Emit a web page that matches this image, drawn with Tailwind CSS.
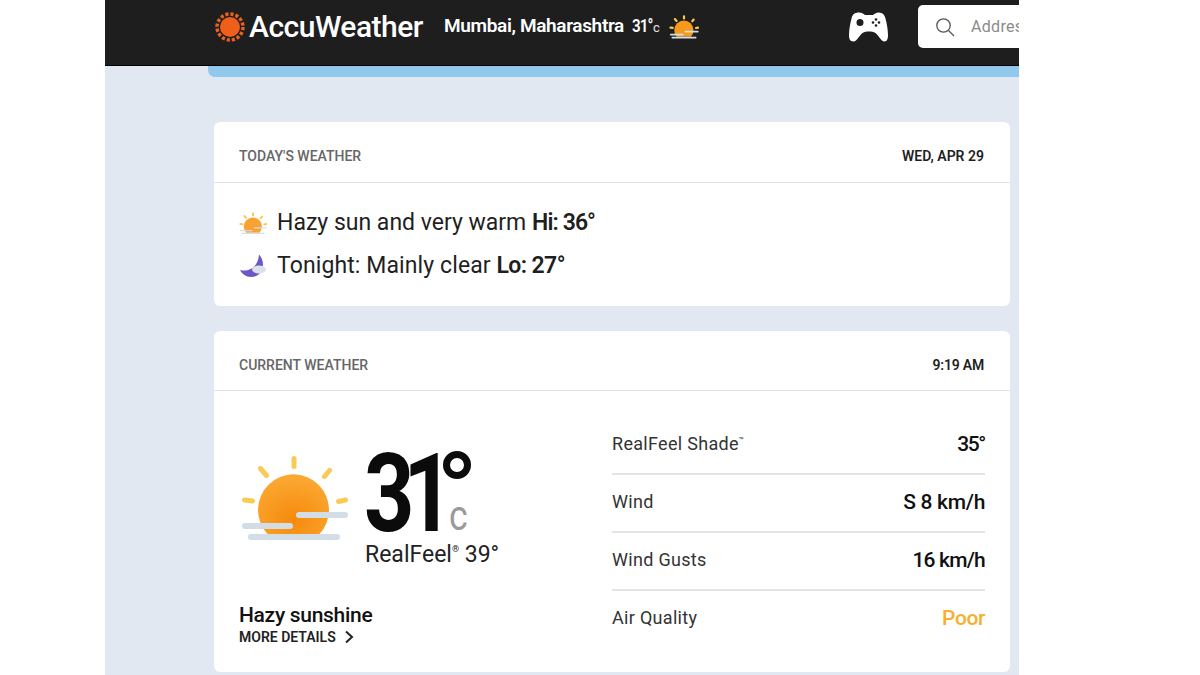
<!DOCTYPE html>
<html lang="en">
  <head>
    <meta charset="UTF-8" />
    <meta name="viewport" content="width=device-width, initial-scale=1.0" />
    <title>AccuWeather</title>
    <script src="https://cdn.jsdelivr.net/npm/@tailwindcss/browser@4"></script>
  </head>
  <body class="bg-white overflow-hidden font-['Roboto',sans-serif]">
    <div class="w-[1200px] h-[675px] pl-[105px] pr-[181px]">
      <div class="w-[914px] h-[675px] bg-[#e1e8f1] overflow-hidden">
        <!-- header -->
        <header class="h-[66px] bg-[#1e1e1e] flex items-center pl-[110px] pb-[12px] text-white border-b border-black">
          <svg class="w-[30px] h-[30px] shrink-0" viewBox="0 0 30 30">
            <circle cx="15" cy="15" r="13" fill="none" stroke="#e8621f" stroke-width="3.500" stroke-dasharray="3.200 1.905" />
            <circle cx="15" cy="15" r="10" fill="#ee5f1b" />
          </svg>
          <span class="ml-[4px] w-[178px] text-[30px] leading-none tracking-[-0.5px] font-medium">AccuWeather</span>
          <span class="ml-[17px] w-[188px] text-[19px] font-semibold tracking-[-0.35px] whitespace-nowrap">Mumbai, Maharashtra</span>
          <span class="block w-[20px] origin-left scale-x-[0.8] text-[19px] font-semibold tracking-[-1.2px] whitespace-nowrap">31°</span>
          <span class="text-[13px] text-gray-200 mt-[3px] ml-[1px] w-[16px]">c</span>
          <svg class="w-[30px] h-[25px] shrink-0" viewBox="0 0 110 92">
            <g stroke="#f8cb57" stroke-width="8" stroke-linecap="round">
              <path d="M55 8.500v8M21.500 18.500l6 7M90.500 20.500l-5 6M5.500 50l8 1M106.500 50l-7 1.500" />
            </g>
            <path d="M28.500 84A35.500 35.500 0 1 1 80.500 84Z" fill="#f79a1c" />
            <g stroke="#d3dde6" stroke-width="6" stroke-linecap="round">
              <path d="M60 65H106M6 76H51M12 87H98" />
            </g>
          </svg>
          <svg class="w-[40px] h-[32px] ml-[150px] shrink-0" viewBox="0 0 40 32">
            <path fill="#fff" d="M10 1.500c3 0 5 1.500 6 2.500h8c1-1 3-2.500 6-2.500 3.500 0 5.500 2 6.500 6 1.200 4.500 2.500 11 2.500 17 0 3-1 6-3.500 6-3.500 0-6-6.500-9-8.500-2-1.200-4-1.500-6.500-1.500s-4.500.3-6.500 1.500c-3 2-5.500 8.500-9 8.500C1 30.500 0 27.500 0 24.500c0-6 1.300-12.500 2.500-17 1-4 3-6 7.500-6z" />
            <circle cx="11" cy="11.500" r="3.500" fill="#1e1e1e" />
            <g fill="#1e1e1e">
              <circle cx="27" cy="8.500" r="1.300" />
              <circle cx="27" cy="14.500" r="1.300" />
              <circle cx="24" cy="11.500" r="1.300" />
              <circle cx="30" cy="11.500" r="1.300" />
            </g>
          </svg>
          <div class="ml-[29px] w-[101px] h-[43px] bg-white rounded-l-[5px] flex items-center pl-[17px] shrink-0 overflow-hidden">
            <svg class="w-[20px] h-[20px] shrink-0" viewBox="0 0 20 20" fill="none" stroke="#555" stroke-width="1.300">
              <circle cx="8.500" cy="8.500" r="6.700" />
              <path d="M13.500 13.500l5.500 5.500" />
            </svg>
            <span class="ml-[16px] text-[16px] text-[#8b8b8b] tracking-[0.3px] whitespace-nowrap">Addres</span>
          </div>
        </header>

        <div class="ml-[103px] h-[11px] bg-[#90c8ee] rounded-bl-[7px]"></div>

        <main class="ml-[109px] mr-[9px] pt-[45px] flex flex-col gap-[25px]">
          <!-- today -->
          <section class="h-[184px] bg-white rounded-[6px]">
            <div class="h-[61px] px-[25px] pt-[8px] flex items-center justify-between border-b border-[#e3e3e3]">
              <h2 class="text-[14px] text-[#666] font-medium">TODAY'S WEATHER</h2>
              <span class="mr-[1px] text-[14px] text-[#1f1f1f] font-semibold">WED, APR 29</span>
            </div>
            <div class="pl-[25px] pt-[24px] flex flex-col gap-[11px] text-[23px] leading-[32px] text-[#1f1f1f]">
              <div class="flex items-center">
                <svg class="w-[28px] h-[24px] shrink-0" viewBox="0 0 110 92">
                  <g stroke="#f8cb57" stroke-width="8" stroke-linecap="round">
                    <path d="M55 8.500v8M21.500 18.500l6 7M90.500 20.500l-5 6M5.500 50l8 1M106.500 50l-7 1.500" />
                  </g>
                  <path d="M28.500 84A35.500 35.500 0 1 1 80.500 84Z" fill="#f7a233" />
                  <g stroke="#d3dde6" stroke-width="5" stroke-linecap="round">
                    <path d="M60 65H106M6 76H51M12 87H98" />
                  </g>
                </svg>
                <p class="ml-[10px]">Hazy sun and very warm <b class="font-semibold tracking-[-0.9px]">Hi: 36°</b></p>
              </div>
              <div class="flex items-center">
                <svg class="w-[28px] h-[24px] shrink-0" viewBox="0 0 28 24">
                  <path d="M20 .5C27 8 25 23 12 23 7 23 3 20 1 16 8 18 19 15 20 .5z" fill="#6a58c8" />
                  <ellipse cx="20" cy="15.500" rx="7" ry="4" fill="#dbe3ea" />
                </svg>
                <p class="ml-[10px] tracking-[0.1px]">Tonight: Mainly clear <b class="font-semibold tracking-[-0.6px]">Lo: 27°</b></p>
              </div>
            </div>
          </section>

          <!-- current -->
          <section class="h-[341px] bg-white rounded-[6px]">
            <div class="h-[60px] px-[25px] pt-[9px] flex items-center justify-between border-b border-[#e3e3e3]">
              <h2 class="text-[14px] text-[#666] font-medium">CURRENT WEATHER</h2>
              <span class="mr-[1px] text-[14px] text-[#1f1f1f] font-semibold tracking-[-0.2px]">9:19 AM</span>
            </div>
            <div class="px-[25px] flex">
              <div class="w-[373px] pt-[56px] shrink-0">
                <div class="flex">
                  <svg class="w-[110px] h-[92px] mt-[3px] shrink-0" viewBox="0 0 110 92">
                    <defs>
                      <radialGradient id="sun" cx="50%" cy="75%" r="70%">
                        <stop offset="0%" stop-color="#f58a0c" />
                        <stop offset="100%" stop-color="#fba832" />
                      </radialGradient>
                    </defs>
                    <g stroke="#f8cb57" stroke-width="5" stroke-linecap="round">
                      <path d="M55 8.500v8M21.500 18.500l6 7M90.500 20.500l-5 6M5.500 50l8 1M106.500 50l-7 1.500" />
                    </g>
                    <path d="M28.500 84A35.500 35.500 0 1 1 80.500 84Z" fill="url(#sun)" />
                    <g stroke="#d3dde6" stroke-width="6" stroke-linecap="round">
                      <path d="M60 65H106M6 76H51M12 87H98" />
                    </g>
                  </svg>
                  <div class="ml-[15px]">
                    <div class="relative h-[94px]">
                      <span class="block w-[76px] origin-left scale-x-[0.8] text-[110px] leading-[94px] font-bold tracking-[-14px] text-[#0b0b0b]">31</span>
                      <span class="absolute left-[79px] top-[4px] w-[28px] h-[28px] rounded-full border-[7px] border-[#0b0b0b]"></span>
                      <span class="absolute left-[85px] top-[46px] origin-left scale-x-[0.85] text-[42px] leading-[46px] text-[#9a9a9a]">c</span>
                    </div>
                    <p class="mt-[1px] pl-[1px] text-[23px] leading-[26px] text-[#222] whitespace-nowrap">RealFeel<sup class="text-[9px] top-[-10px]">®</sup> 39°</p>
                  </div>
                </div>
                <p class="mt-[35px] text-[21px] leading-[24px] font-medium tracking-[-0.3px] text-[#111]">Hazy sunshine</p>
                <a class="flex items-center text-[14px] leading-[20px] font-semibold text-[#222]">MORE DETAILS
                  <svg class="w-[10px] h-[14px] ml-[8px]" viewBox="0 0 10 14" fill="none" stroke="#222" stroke-width="2"><path d="M2 1.500l6 5.500-6 5.500" /></svg>
                </a>
              </div>
              <ul class="w-[373px] pt-[26px] text-[18px] text-[#333] tracking-[0.3px]">
                <li class="h-[58px] flex items-center justify-between border-b-2 border-[#e4e4e4]"><span class="pb-[4px]">RealFeel Shade<sup class="text-[8px] top-[-7px]">™</sup></span><b class="text-[21px] font-medium text-[#111] tracking-[-1.4px]">35°</b></li>
                <li class="h-[58px] flex items-center justify-between border-b-2 border-[#e4e4e4]"><span class="pb-[4px]">Wind</span><b class="text-[21px] font-medium text-[#111] tracking-[-0.3px]">S 8 km/h</b></li>
                <li class="h-[58px] flex items-center justify-between border-b-2 border-[#e4e4e4]"><span class="pb-[4px]">Wind Gusts</span><b class="text-[21px] font-medium text-[#111] tracking-[-0.8px]">16 km/h</b></li>
                <li class="h-[58px] flex items-center justify-between border-b-2 border-transparent"><span class="pb-[4px]">Air Quality</span><b class="text-[21px] font-medium text-[#f5b12d] tracking-[-0.4px]">Poor</b></li>
              </ul>
            </div>
          </section>
        </main>
      </div>
    </div>
  </body>
</html>
